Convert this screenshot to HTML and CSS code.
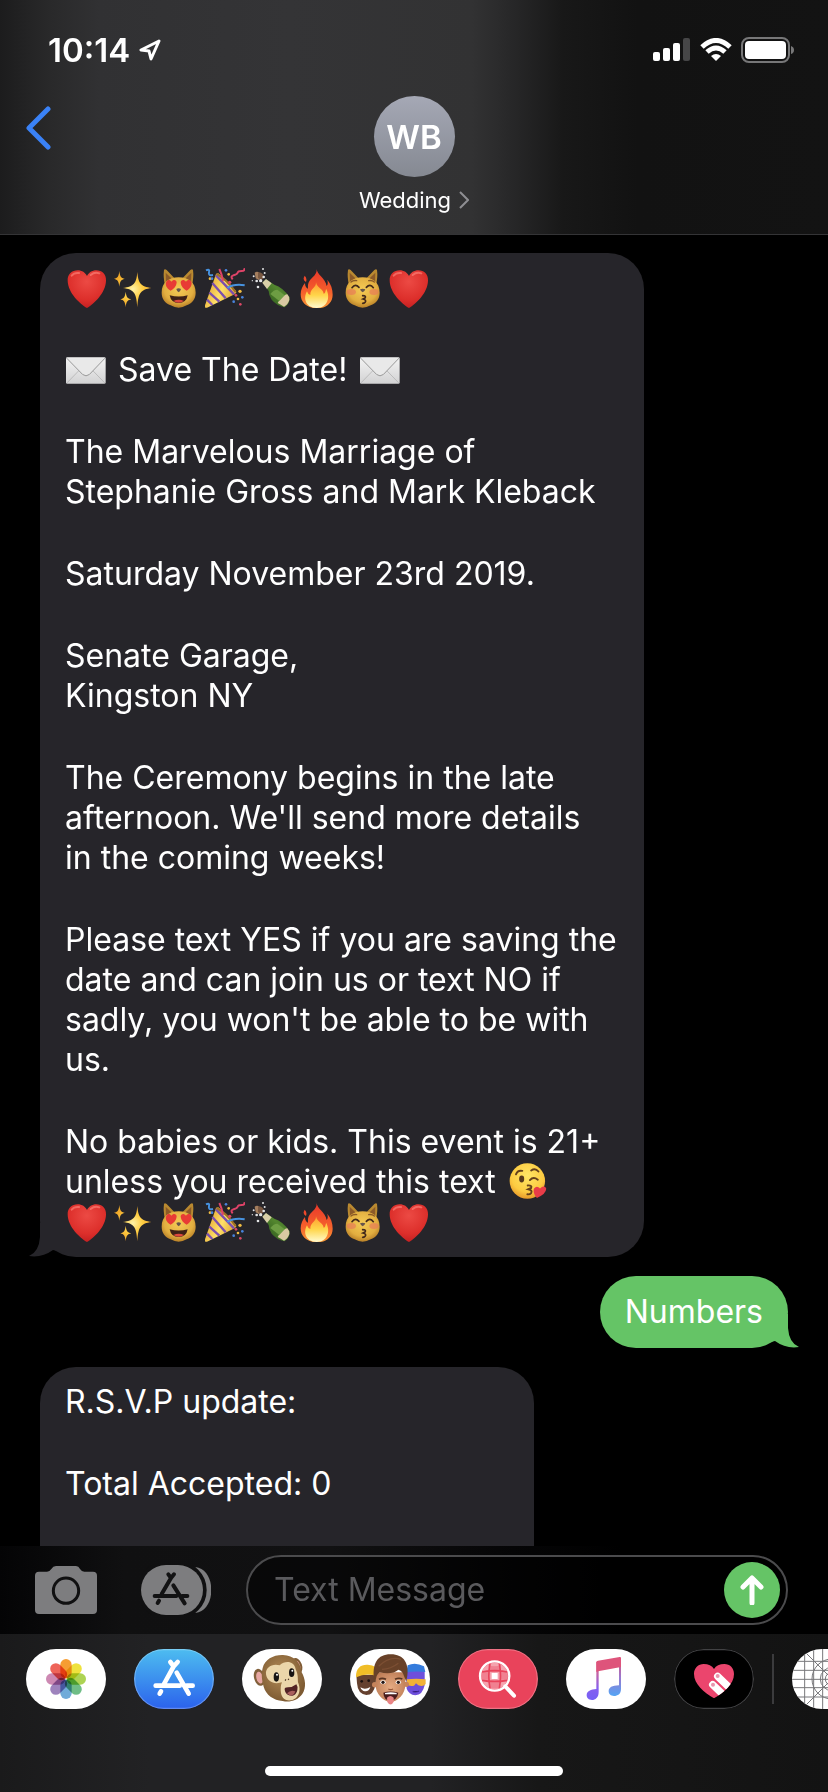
FILE: index.html
```html
<!DOCTYPE html>
<html lang="en">
<head>
<meta charset="utf-8">
<meta name="viewport" content="width=device-width, initial-scale=1">
<title>Wedding</title>
<link rel="stylesheet" href="styles.css">
</head>
<body>
<svg class="sprites" width="0" height="0" aria-hidden="true">
  <defs>
    <radialGradient id="g-heart" cx=".5" cy=".3" r=".8"><stop offset="0" stop-color="#ec4a44"/><stop offset=".6" stop-color="#dd2f2b"/><stop offset="1" stop-color="#b91a1e"/></radialGradient>
    <radialGradient id="g-cat" cx=".5" cy=".4" r=".6"><stop offset="0" stop-color="#f5cb55"/><stop offset=".7" stop-color="#e2ae40"/><stop offset="1" stop-color="#b88028"/></radialGradient>
    <radialGradient id="g-star"><stop offset="0" stop-color="#fff3a8"/><stop offset=".5" stop-color="#ffcf45"/><stop offset="1" stop-color="#f0a92b"/></radialGradient>
    <linearGradient id="g-cone" x1="0" y1=".3" x2="1" y2=".8"><stop offset="0" stop-color="#e0a02c"/><stop offset=".5" stop-color="#ffe069"/><stop offset="1" stop-color="#d99b2a"/></linearGradient>
    <linearGradient id="g-fire" x1="0" y1="0" x2="0" y2="1"><stop offset="0" stop-color="#e8352a"/><stop offset=".6" stop-color="#f5602c"/><stop offset="1" stop-color="#fb9b35"/></linearGradient>
    <linearGradient id="g-flame" x1="0" y1="0" x2="0" y2="1"><stop offset="0" stop-color="#ff9b30"/><stop offset=".5" stop-color="#ffd54a"/><stop offset="1" stop-color="#fffbd0"/></linearGradient>
    <linearGradient id="g-bottle" x1="0" y1="1" x2="1" y2="0"><stop offset="0" stop-color="#234d17"/><stop offset=".6" stop-color="#54872f"/><stop offset="1" stop-color="#2f6020"/></linearGradient>
    <linearGradient id="g-mail" x1="0" y1="0" x2="0" y2="1"><stop offset="0" stop-color="#f4f4f4"/><stop offset="1" stop-color="#d2d2d3"/></linearGradient>
    <radialGradient id="g-face" cx=".5" cy=".35" r=".65"><stop offset="0" stop-color="#ffe566"/><stop offset=".7" stop-color="#fccb41"/><stop offset="1" stop-color="#e79a2a"/></radialGradient>
    <linearGradient id="g-store" x1="0" y1="0" x2="0" y2="1"><stop offset="0" stop-color="#4dbdf0"/><stop offset="1" stop-color="#2b62ec"/></linearGradient>
    <linearGradient id="g-note" x1="0" y1="0" x2="0" y2="1"><stop offset="0" stop-color="#e0517a"/><stop offset=".3" stop-color="#c664a4"/><stop offset=".7" stop-color="#8560f0"/><stop offset="1" stop-color="#7560f5"/></linearGradient>
    <linearGradient id="g-note2" x1="0" y1="0" x2="0" y2="1"><stop offset="0" stop-color="#dd5276"/><stop offset=".5" stop-color="#9a78cf"/><stop offset="1" stop-color="#53a5f5"/></linearGradient>
    <radialGradient id="g-fur" cx=".45" cy=".4" r=".6"><stop offset="0" stop-color="#b58d58"/><stop offset="1" stop-color="#7d5a32"/></radialGradient>
    <radialGradient id="g-skin" cx=".5" cy=".5" r=".6"><stop offset="0" stop-color="#e6ab83"/><stop offset="1" stop-color="#bd7c55"/></radialGradient>
    <path id="heart-shape" d="M171 189C150 176 114 144 113 107C112 87 126 76 143 76C156 76 166 83 171 93C176 83 186 76 199 76C216 76 229 87 228 107C227 144 192 176 171 189Z"/>
    <g id="cat-head">
      <path d="M402 75Q404 71 410 75L435 101L405 122Q399 96 402 75ZM489 75Q487 71 481 75L456 101L486 122Q492 96 489 75Z" fill="#b98930"/>
      <path d="M407 83L424 100L408 113ZM484 83L467 100L483 113Z" fill="#8c5a28"/>
      <path d="M395 143C395 112 417 97 446 97S497 112 497 143C497 163 486 174 470 181Q458 188 446 188T422 181C406 174 395 163 395 143Z" fill="url(#g-cat)"/>
    </g>
    <symbol id="e-heart" viewBox="111 69 120 120"><use href="#heart-shape" fill="url(#g-heart)"/><path d="M125 92Q133 82 147 84M182 90Q194 80 208 85" fill="none" stroke="#ff8b80" stroke-width="6" stroke-linecap="round" opacity=".6"/></symbol>
    <symbol id="e-sparkles" viewBox="249 69 120 120">
      <path fill="url(#g-star)" d="M322 81C325 116 332 124 365 129C332 134 325 142 322 187C319 142 312 134 279 129C312 124 319 116 322 81ZM268 78C270 95 273 99 284 101C273 104 270 108 268 125C266 108 263 104 252 101C263 99 266 95 268 78ZM287 140C289 156 292 160 304 163C292 166 289 170 287 187C285 170 282 166 271 163C282 160 285 156 287 140Z"/>
    </symbol>
    <symbol id="e-lovecat" viewBox="387 69 120 120"><use href="#cat-head"/>
      <path d="M422 137C409 129 405 119 409 110C413 103 420 104 424 110C430 102 440 104 440 113C439 124 431 131 422 137ZM470 137C461 131 453 124 452 113C452 104 462 102 468 110C472 104 480 103 484 110C487 119 482 129 470 137Z" fill="#e83b35"/>
      <path d="M439 132Q446 128 453 132Q451 140 446 142Q441 140 439 132Z" fill="#66554b"/>
      <path d="M419 151Q446 158 473 151Q469 174 446 174T419 151Z" fill="#3e2117"/><path d="M430 168Q446 160 462 168Q446 178 430 168Z" fill="#dc473d"/>
    </symbol>
    <symbol id="e-party" viewBox="525 69 120 120">
      <path d="M558 87Q563 82 570 89L616 136Q622 143 614 148L531 188Q523 190 525 181Z" fill="url(#g-cone)"/>
      <path d="M547 114L587 160M538 143L568 170M531 164L547 180M558 91L612 148" stroke="#7b4fae" stroke-width="7"/>
      <path d="M560 87Q590 103 617 141" stroke="#9c6e25" stroke-width="6" fill="none"/>
      <path d="M568 72Q576 88 579 108M608 103Q600 94 611 91T623 83T635 78T642 70" fill="none" stroke="#df4368" stroke-width="6"/>
      <path d="M528 76Q540 70 537 82T549 90M592 129Q612 116 644 121" fill="none" stroke="#4792df" stroke-width="6"/>
      <g fill="#f0bd43"><circle cx="596" cy="88" r="4"/><circle cx="630" cy="139" r="5"/><circle cx="624" cy="162" r="4"/><circle cx="540" cy="101" r="4"/></g>
      <g fill="#4884dc"><circle cx="588" cy="76" r="4"/><circle cx="546" cy="101" r="4"/><circle cx="611" cy="170" r="4"/><circle cx="637" cy="157" r="4"/></g>
      <g fill="#dc4967"><circle cx="618" cy="151" r="4"/><circle cx="599" cy="112" r="5"/><circle cx="631" cy="178" r="4"/></g>
    </symbol>
    <symbol id="e-bottle" viewBox="663 69 120 120">
      <path d="M698 112L708 103L733 119Q759 127 779 157Q780 175 764 187Q740 182 725 164Q716 151 716 138Z" fill="url(#g-bottle)"/>
      <path d="M697 113L708 102L725 115L711 132Z" fill="#d9cfa8"/>
      <path d="M749 164Q765 148 772 148Q780 157 778 165Q773 180 762 185Q750 178 743 174Z" fill="#d9c9a2"/>
      <path d="M721 147Q731 134 742 134L764 151L748 168Z" fill="#6d9d43"/>
      <path d="M674 83Q681 78 688 83L695 97L686 105L677 100Z" fill="#a47e5e"/>
      <path d="M684 82Q700 82 702 96L695 106L684 99Z" fill="#795842"/>
      <g fill="#e3e4e6"><circle cx="692" cy="107" r="5"/><circle cx="701" cy="96" r="4"/><circle cx="680" cy="108" r="4"/><circle cx="684" cy="126" r="4"/><circle cx="667" cy="107" r="2"/><circle cx="699" cy="72" r="3"/><circle cx="704" cy="84" r="3"/><circle cx="671" cy="94" r="3"/></g>
    </symbol>
    <symbol id="e-fire" viewBox="801 69 120 120">
      <path d="M860 70C859 88 886 98 890 123C895 117 893 109 892 104C903 117 908 132 908 149C908 174 888 190 861 190S812 175 812 148C812 134 818 122 825 114C825 124 829 129 834 131C832 112 841 104 848 97C857 88 861 81 860 70ZM824 92Q832 99 828 111Q816 105 824 92Z" fill="url(#g-fire)"/>
      <path d="M858 112C861 130 879 130 881 146C887 145 886 136 889 132C902 159 892 188 860 189C826 188 819 160 831 139Q834 149 841 150C840 130 859 129 858 112Z" fill="url(#g-flame)"/>
    </symbol>
    <symbol id="e-kisscat" viewBox="387 69 120 120"><use href="#cat-head"/>
      <g fill="#e9745a" opacity=".6"><ellipse cx="412" cy="141" rx="14" ry="9"/><ellipse cx="480" cy="141" rx="14" ry="9"/></g>
      <path d="M414 128Q424 115 435 127M457 127Q468 115 478 128M446 152Q458 152 453 159L447 162Q459 165 453 172Q450 175 446 175" fill="none" stroke="#42291b" stroke-width="5" stroke-linecap="round"/>
      <path d="M411 111Q418 105 428 107M464 107Q474 105 481 111" fill="none" stroke="#8b5b27" stroke-width="4" stroke-linecap="round"/>
      <path d="M438 133Q446 129 454 133Q451 141 446 142Q441 141 438 133Z" fill="#66554b"/>
    </symbol>
    <symbol id="e-mail" viewBox="110 334 120 80">
      <rect x="110" y="334" width="119" height="80" rx="4" fill="url(#g-mail)"/>
      <path d="M113 411L153 370M226 411L186 370" stroke="#aaa" stroke-width="2"/>
      <path d="M112 337L160 386Q170 394 180 386L227 337" fill="#e9e9e9" stroke="#999" stroke-width="3"/>
    </symbol>
    <symbol id="e-kiss" viewBox="0 0 120 120">
      <circle cx="58" cy="60" r="56" fill="url(#g-face)"/>
      <path d="M22 39Q27 25 42 28M70 27Q83 18 93 30M66 57Q77 45 91 56M59 74Q74 73 70 82L61 86Q75 89 70 98Q66 103 58 102" fill="none" stroke="#65401b" stroke-width="6" stroke-linecap="round"/>
      <ellipse cx="40" cy="54" rx="8" ry="11" fill="#57381c"/>
      <path d="M88 114Q74 96 79 84Q88 73 98 84Q109 72 117 82Q121 99 88 114Z" fill="#e83c48"/>
    </symbol>
  </defs>
</svg>

<div class="phone">
  <header class="top">
    <div class="status">
      <div class="status-side">
        <span class="clock">10:14</span>
        <svg class="locate" viewBox="0 0 22 22" aria-hidden="true"><path d="M20 2L2 11L10 12L12 20Z" fill="none" stroke="#fff" stroke-width="3" stroke-linejoin="round"/></svg>
      </div>
      <div class="status-side">
        <svg width="38" height="24" viewBox="0 0 38 24" aria-label="Signal"><g fill="#fff"><rect x="0" y="14" width="7" height="9" rx="2"/><rect x="10" y="10" width="7" height="13" rx="2"/><rect x="20" y="5" width="7" height="18" rx="2"/><rect x="30" y="0" width="7" height="23" rx="2" fill="#464647"/></g></svg>
        <svg width="32" height="24" viewBox="0 0 32 24" aria-label="Wi-Fi"><g fill="none" stroke="#fff" stroke-width="5"><path d="M2 9Q16 -4 30 9"/><path d="M7 14Q16 6 25 14"/></g><path d="M11 18Q16 14 21 18L16 23Z" fill="#fff"/></svg>
        <svg width="54" height="26" viewBox="0 0 54 26" aria-label="Battery"><rect x="1" y="1" width="47" height="24" rx="7" fill="none" stroke="#777778" stroke-width="2"/><rect x="4" y="4" width="41" height="18" rx="4" fill="#fff"/><path d="M50 9Q53 10 53 13T50 17Z" fill="#777778"/></svg>
      </div>
    </div>
    <div class="contact-bar">
      <button class="back" aria-label="Back"><svg width="26" height="44" viewBox="0 0 26 44"><path d="M23 3L4 22L23 41" fill="none" stroke="#3a82f7" stroke-width="5" stroke-linecap="round" stroke-linejoin="round"/></svg></button>
      <button class="contact">
        <span class="avatar">WB</span>
        <span class="contact-name">Wedding <svg width="10" height="18" viewBox="0 0 10 18" aria-hidden="true"><path d="M1 1L9 9L1 17" fill="none" stroke="#8e8e92" stroke-width="2"/></svg></span>
      </button>
    </div>
  </header>

  <main class="thread">
    <article class="bubble received wide">
      <p class="emoji-row"><svg class="emoji"><use href="#e-heart"/></svg><svg class="emoji"><use href="#e-sparkles"/></svg><svg class="emoji"><use href="#e-lovecat"/></svg><svg class="emoji"><use href="#e-party"/></svg><svg class="emoji"><use href="#e-bottle"/></svg><svg class="emoji"><use href="#e-fire"/></svg><svg class="emoji"><use href="#e-kisscat"/></svg><svg class="emoji"><use href="#e-heart"/></svg></p>
      <p class="mail-row"><svg class="mail"><use href="#e-mail"/></svg><span>Save The Date!</span><svg class="mail"><use href="#e-mail"/></svg></p>
      <p>The Marvelous Marriage of<br>Stephanie Gross and Mark Kleback</p>
      <p>Saturday November 23rd 2019.</p>
      <p>Senate Garage,<br>Kingston NY</p>
      <p>The Ceremony begins in the late<br>afternoon. We'll send more details<br>in the coming weeks!</p>
      <p>Please text YES if you are saving the<br>date and can join us or text NO if<br>sadly, you won't be able to be with<br>us.</p>
      <div>
        <p>No babies or kids. This event is 21+<br>unless you received this text <svg class="kiss"><use href="#e-kiss"/></svg></p>
        <p class="emoji-row"><svg class="emoji"><use href="#e-heart"/></svg><svg class="emoji"><use href="#e-sparkles"/></svg><svg class="emoji"><use href="#e-lovecat"/></svg><svg class="emoji"><use href="#e-party"/></svg><svg class="emoji"><use href="#e-bottle"/></svg><svg class="emoji"><use href="#e-fire"/></svg><svg class="emoji"><use href="#e-kisscat"/></svg><svg class="emoji"><use href="#e-heart"/></svg></p>
      </div>
      <svg class="tail tail-left" viewBox="0 0 36 34" aria-hidden="true"><path d="M11 0V14Q10 29 0 33Q13 35 24 27L36 30V0Z" fill="#26252a"/></svg>
    </article>
    <article class="bubble sent">
      <p>Numbers</p>
      <svg class="tail tail-right" viewBox="0 0 36 34" aria-hidden="true"><path d="M25 0V14Q26 29 36 33Q23 35 12 27L0 30V0Z" fill="#65c466"/></svg>
    </article>
    <article class="bubble received medium">
      <p>R.S.V.P update:</p>
      <p>Total Accepted: 0</p>
    </article>
  </main>

  <form class="composer">
    <button type="button" class="tool" aria-label="Camera"><svg width="62" height="48" viewBox="105 111 186 144"><path d="M117 128H141Q149 128 154 120Q159 111 168 111H228Q236 111 240 120Q245 128 253 128H279Q291 128 291 140V243Q291 255 279 255H117Q105 255 105 243V140Q105 128 117 128Z" fill="#7d7d7f"/><circle cx="198" cy="185" r="38" fill="none" stroke="#101011" stroke-width="9"/></svg></button>
    <button type="button" class="tool" aria-label="Apps"><svg width="70" height="50" viewBox="423 108 210 150"><path d="M586 114C650 120 650 246 586 252Z" fill="#7d7d7f"/><rect x="423" y="108" width="186" height="150" rx="75" fill="#7d7d7f" stroke="#101011" stroke-width="22" paint-order="stroke"/><g fill="none" stroke="#121213" stroke-width="12" stroke-linecap="round"><path d="M505 136L513 147L522 136M513 147L485 195M464 201H529M477 215L473 222M520 169L554 223M546 201H562"/></g></svg></button>
    <div class="field">
      <input type="text" aria-label="Text Message" placeholder="Text Message">
      <button type="button" class="send" aria-label="Send"><svg width="24" height="30" viewBox="0 0 24 30"><path d="M12 28V4M3 12L12 3L21 12" fill="none" stroke="#fff" stroke-width="5" stroke-linecap="round" stroke-linejoin="round"/></svg></button>
    </div>
  </form>

  <footer class="drawer">
    <nav class="apps" aria-label="Message apps">
      <button class="app" aria-label="Photos"><svg viewBox="48 27 240 180"><rect x="48" y="27" width="240" height="180" fill="#fff"/>
        <g class="petals"><rect x="151" y="57" width="34" height="58" rx="17" fill="#f69d32"/><rect x="151" y="57" width="34" height="58" rx="17" fill="#efe23d" transform="rotate(45 168 117)"/><rect x="151" y="57" width="34" height="58" rx="17" fill="#add353" transform="rotate(90 168 117)"/><rect x="151" y="57" width="34" height="58" rx="17" fill="#6fbd86" transform="rotate(135 168 117)"/><rect x="151" y="57" width="34" height="58" rx="17" fill="#71abd9" transform="rotate(180 168 117)"/><rect x="151" y="57" width="34" height="58" rx="17" fill="#9e83bd" transform="rotate(225 168 117)"/><rect x="151" y="57" width="34" height="58" rx="17" fill="#cd89b3" transform="rotate(270 168 117)"/><rect x="151" y="57" width="34" height="58" rx="17" fill="#ee6459" transform="rotate(315 168 117)"/></g></svg></button>
      <button class="app" aria-label="App Store"><svg viewBox="372 27 240 180"><rect x="372" y="27" width="240" height="180" fill="url(#g-store)"/><rect x="374" y="29" width="236" height="176" rx="86" fill="none" stroke="#fff" stroke-opacity=".25" stroke-width="4"/><path d="M481 66L491 79L503 66M491 79L462 132M437 137H509M453 154L449 161M500 98L536 161M530 137H548" fill="none" stroke="#fff" stroke-width="14" stroke-linecap="round"/></svg></button>
      <button class="app" aria-label="Animoji"><svg viewBox="36 27 240 180"><rect x="36" y="27" width="240" height="180" fill="#fff"/>
        <ellipse cx="88" cy="112" rx="16" ry="26" fill="#82603b" transform="rotate(-14 88 112)"/><ellipse cx="89" cy="113" rx="10" ry="18" fill="#e8a8a4" transform="rotate(-14 89 113)"/><ellipse cx="201" cy="77" rx="15" ry="24" fill="#7f5b34" transform="rotate(-20 201 77)"/><ellipse cx="202" cy="77" rx="8" ry="15" fill="#d99b94" transform="rotate(-20 202 77)"/>
        <path d="M98 84C104 58 131 44 159 45C192 46 211 66 215 97C226 116 230 143 217 162C203 182 178 188 158 183C130 181 108 164 101 140C96 121 93 104 98 84Z" fill="url(#g-fur)"/>
        <path d="M108 103C105 82 128 69 149 76C166 60 193 63 197 88C205 104 203 117 204 127C211 144 211 161 198 174C181 187 158 184 153 160Q150 140 156 127C133 134 111 126 108 103Z" fill="#ebd6aa"/>
        <ellipse cx="139" cy="111" rx="8" ry="14" fill="#161312"/><ellipse cx="185" cy="98" rx="8" ry="13" fill="#161312"/><circle cx="141" cy="104" r="3" fill="#fff"/><circle cx="187" cy="92" r="3" fill="#fff"/>
        <path d="M165 119L168 121M174 117L177 119" stroke="#4c3523" stroke-width="4"/><path d="M164 149Q163 142 174 142Q188 142 199 133Q204 139 202 150C199 167 185 170 175 165Q166 161 164 149Z" fill="#522325"/><path d="M171 160Q182 148 196 154Q192 167 181 167Z" fill="#a95f5d"/></svg></button>
      <button class="app" aria-label="Memoji"><svg viewBox="360 27 240 180"><rect x="360" y="27" width="240" height="180" fill="#fff"/>
        <path d="M379 104H436V135Q431 165 409 165Q383 162 381 130Z" fill="#65412f"/><path d="M378 110C378 85 391 74 410 74Q426 73 438 82V108Q408 98 379 112Z" fill="#f0bd27"/><path d="M391 142Q405 151 421 141Q417 155 405 154Q395 153 391 142Z" fill="#fff"/><circle cx="395" cy="124" r="4" fill="#1b1210"/><circle cx="416" cy="122" r="4" fill="#1b1210"/>
        <path d="M529 91H584V135Q578 165 556 166Q536 163 530 146Z" fill="#6e4fdb"/><path d="M529 97L533 76Q556 65 582 79L586 96Q560 92 529 97Z" fill="#347bdc"/><path d="M531 118Q558 114 587 118V132Q579 142 565 136L558 130L552 137Q538 141 531 132Z" fill="#f2b138"/><path d="M548 154Q557 158 567 153" stroke="#41249a" stroke-width="4"/>
        <path d="M437 97H526V133C526 164 503 184 482 187C457 182 437 161 437 135Z" fill="url(#g-skin)"/><circle cx="434" cy="134" r="8" fill="#c6845c"/><circle cx="529" cy="133" r="8" fill="#c6845c"/>
        <path d="M433 126C424 69 444 43 481 43C519 42 543 68 529 125L522 108Q517 91 505 89Q487 105 449 97Q438 103 437 127Z" fill="#684128"/><path d="M446 79Q478 47 513 58M456 88Q482 88 505 70" fill="none" stroke="#7c4f33" stroke-width="4"/>
        <path d="M447 118Q456 112 468 118M495 118Q506 112 517 117" fill="none" stroke="#583522" stroke-width="5"/><ellipse cx="459" cy="127" rx="8" ry="6" fill="#fff"/><ellipse cx="505" cy="127" rx="8" ry="6" fill="#fff"/><circle cx="459" cy="127" r="5" fill="#251715"/><circle cx="505" cy="127" r="5" fill="#251715"/>
        <path d="M475 147Q482 151 489 147" fill="none" stroke="#985739" stroke-width="4"/><path d="M460 158Q481 151 505 158Q501 181 481 181T460 158Z" fill="#491c1d"/><path d="M465 159Q482 155 500 159V163H465Z" fill="#fff"/><path d="M471 173Q481 163 491 173V185Q482 202 472 186Z" fill="#e98486"/></svg></button>
      <button class="app" aria-label="Image search"><svg viewBox="54 27 240 180"><rect x="54" y="27" width="240" height="180" fill="#e9435b"/><rect x="56" y="29" width="236" height="176" rx="86" fill="none" stroke="#fff" stroke-opacity=".25" stroke-width="4"/>
        <circle cx="164" cy="108" r="40" fill="#f5a3ae"/><path d="M145 74Q163 84 183 74L179 94Q163 99 149 94ZM124 97L145 93L148 119L125 119ZM181 94L204 97V119L181 119ZM148 121Q164 117 181 121L177 144Q164 147 150 144Z" fill="#e9435b" opacity=".35"/><path d="M155 99H173V117H155Z" fill="#fff"/><path d="M150 70Q143 108 150 146M178 70Q185 108 178 146M126 96Q164 88 202 96M126 121Q164 128 202 121" fill="none" stroke="#e9435b" stroke-width="5"/><circle cx="164" cy="108" r="44" fill="none" stroke="#fff" stroke-width="7"/><path d="M196 139L222 167" stroke="#fff" stroke-width="12" stroke-linecap="round"/></svg></button>
      <button class="app" aria-label="Music"><svg viewBox="378 27 240 180"><rect x="378" y="27" width="240" height="180" fill="#fff"/><path d="M476 65V156C476 173 466 180 456 180C446 180 440 174 440 166C440 152 453 149 469 147V66Z" fill="url(#g-note)"/><path d="M537 55H543V147C543 162 533 168 522 168C512 168 506 162 506 154C506 142 516 137 537 136Z" fill="url(#g-note2)"/><path d="M469 66Q469 63 474 62L539 51Q543 50 543 55V81L474 94L469 96Z" fill="#de547b"/></svg></button>
      <button class="app" aria-label="Digital Touch"><svg viewBox="72 27 240 180"><rect x="72" y="27" width="240" height="180" fill="#000"/><rect x="74" y="29" width="236" height="176" rx="86" fill="none" stroke="#424244" stroke-width="4"/>
        <clipPath id="touch-clip"><path d="M192 175C162 157 132 132 132 102C132 84 145 72 161 72C175 72 186 77 192 87C198 77 209 72 223 72C240 72 252 84 252 102C252 132 222 157 192 175Z"/></clipPath>
        <g clip-path="url(#touch-clip)"><rect x="132" y="70" width="120" height="110" fill="#eb456d"/><path d="M203 109L253 157M188 134L238 182" stroke="#fff" stroke-width="22" stroke-linecap="round"/></g><circle cx="203" cy="108" r="6" fill="#e995ad"/><circle cx="189" cy="134" r="6" fill="#e995ad"/></svg></button>
      <span class="divider"></span>
      <button class="app" aria-label="Recent app"><svg viewBox="426 27 240 180"><rect x="426" y="27" width="240" height="180" fill="#fff"/><g fill="none" stroke="#77777a" stroke-width="3"><path d="M464 27V207M491 27V207M518 27V207M546 27V207M574 27V207M601 27V207M628 27V207M426 64H666M426 91H666M426 118H666M426 143H666M426 171H666M456 27L636 207M456 207L636 27"/><circle cx="546" cy="117" r="60"/><circle cx="546" cy="117" r="35"/><circle cx="546" cy="117" r="20"/></g></svg></button>
    </nav>
    <div class="home-bar"></div>
  </footer>
</div>
</body>
</html>
```

FILE: styles.css
```css
* { box-sizing: border-box; }

body {
  margin: 0;
  background: #000;
  color: #fff;
  font-family: Inter, "Liberation Sans", sans-serif;
}

p { margin: 0; }

button {
  padding: 0;
  border: 0;
  background: none;
  color: inherit;
  font: inherit;
  cursor: pointer;
}

svg { display: block; }

.sprites { position: absolute; }

.phone {
  display: flex;
  flex-direction: column;
  height: 100vh;
  overflow: hidden;
}

/* Header */
.top {
  flex: none;
  padding-bottom: 20px;
  border-bottom: 1px solid #343436;
  background: linear-gradient(90deg, #1c1c1d 0%, #29292a 6%, #313133 12%, #343436 35%, #323233 57%, #272728 62%, #181818 68%, #121212 77%, #131313 100%);
}

.status {
  display: flex;
  justify-content: space-between;
  align-items: center;
  height: 96px;
  padding: 4px 33px 0 48px;
}

.status-side {
  display: flex;
  align-items: center;
  gap: 9px;
}

.clock {
  font-size: 33px;
  font-weight: 600;
  line-height: 40px;
}

.locate { width: 22px; height: 22px; }

.contact-bar {
  display: grid;
  grid-template-columns: 1fr auto 1fr;
  align-items: start;
  padding: 0 25px;
}

.back {
  justify-self: start;
  padding-top: 10px;
}

.contact {
  display: flex;
  flex-direction: column;
  align-items: center;
  gap: 9px;
}

.avatar {
  display: grid;
  place-items: center;
  width: 81px;
  height: 81px;
  border-radius: 50%;
  background: linear-gradient(#a5a8b5, #858992);
  font-size: 33px;
  font-weight: 600;
}

.contact-name {
  display: flex;
  align-items: center;
  gap: 8px;
  font-size: 22px;
  line-height: 28px;
}

/* Conversation */
.thread {
  display: flex;
  flex: 1;
  flex-direction: column;
  align-items: flex-start;
  gap: 19px;
  min-height: 0;
  padding: 18px 40px 0;
  overflow: hidden;
}

.bubble {
  position: relative;
  display: flex;
  flex: none;
  flex-direction: column;
  gap: 42px;
  padding: 15px 25px;
  border-radius: 36px;
  font-size: 32px;
  line-height: 40px;
  white-space: nowrap;
}

.received { background: #26252a; }
.sent { align-self: flex-end; padding: 16px 25px; background: #65c466; }
.wide { width: 73vw; }
.medium { width: 66%; min-height: 260px; }

.emoji-row { display: flex; }

.emoji {
  width: 40px;
  height: 40px;
  margin: 0 4px 0 2px;
}

.mail-row {
  display: flex;
  align-items: center;
  gap: 12px;
}

.mail { width: 40px; height: 27px; margin-left: 1px; }

.kiss {
  display: inline-block;
  width: 38px;
  height: 38px;
  margin-left: 4px;
  vertical-align: top;
}

.tail {
  position: absolute;
  bottom: 0;
  width: 36px;
  height: 34px;
}

.tail-left { left: -11px; }
.tail-right { right: -11px; }

/* Message entry */
.composer {
  display: flex;
  flex: none;
  align-items: center;
  height: 88px;
  padding: 0 40px 0 35px;
  background: linear-gradient(90deg, #040405 0%, #101011 15%, #111112 40%, #050506 62%, #000 75%);
}

.tool { flex: none; margin-right: 44px; }
.tool + .tool { margin-right: 35px; }

.field {
  display: flex;
  flex: 1;
  align-items: center;
  height: 70px;
  min-width: 0;
  padding: 0 6px 0 26px;
  border: 2px solid #4b4b4d;
  border-radius: 35px;
  background: rgb(0 0 0 / 50%);
}

.field input {
  flex: 1;
  min-width: 0;
  padding: 0;
  border: 0;
  outline: 0;
  background: none;
  color: #fff;
  font: inherit;
  font-size: 32px;
  line-height: 40px;
}

.field input::placeholder { color: #5a5a5d; opacity: 1; }

.send {
  display: grid;
  flex: none;
  place-items: center;
  width: 56px;
  height: 56px;
  border-radius: 50%;
  background: #65c466;
}

/* App drawer */
.drawer {
  display: flex;
  flex: none;
  flex-direction: column;
  align-items: center;
  justify-content: space-between;
  height: 158px;
  padding: 15px 0 16px;
  background: linear-gradient(90deg, #1a1a1b 0%, #222224 18%, #222224 52%, #171717 65%, #131313 100%);
}

.apps {
  display: flex;
  align-items: center;
  gap: 28px;
  width: 100%;
  padding-left: 26px;
  overflow: hidden;
}

.app {
  flex: none;
  width: 80px;
  height: 60px;
  border-radius: 30px;
  overflow: hidden;
}

.app svg { width: 80px; height: 60px; }

.petals rect { mix-blend-mode: multiply; }

.divider {
  flex: none;
  width: 2px;
  height: 50px;
  margin: 0 -10px;
  background: #3b3b3d;
}

.home-bar {
  width: 36%;
  height: 10px;
  border-radius: 5px;
  background: #fff;
}
```
